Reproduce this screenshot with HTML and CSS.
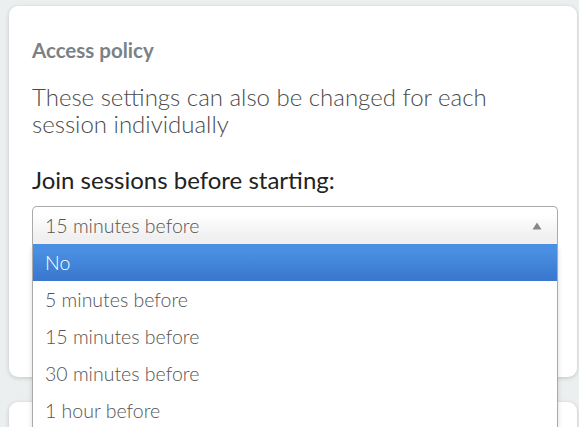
FILE: index.html
```html
<!DOCTYPE html>
<html lang="en">
<head>
<meta charset="utf-8">
<title>Access policy</title>
<link rel="stylesheet" href="styles.css">
</head>
<body>
<div class="page">
  <section class="card">
    <h2 class="card-title">Access policy</h2>
    <p class="hint">These settings can also be changed for each session individually</p>
    <label class="field-label">Join sessions before starting:</label>
    <div class="chosen open">
      <div class="chosen-single">
        <span class="value">15 minutes before</span>
        <svg class="arrow" width="10" height="8" viewBox="0 0 10 8"><path d="M5 0.5 L9.5 7.5 L0.5 7.5 Z" fill="#888"/></svg>
      </div>
      <ul class="chosen-drop">
        <li class="opt highlighted">No</li>
        <li class="opt">5 minutes before</li>
        <li class="opt">15 minutes before</li>
        <li class="opt">30 minutes before</li>
        <li class="opt">1 hour before</li>
      </ul>
    </div>
  </section>
  <section class="card card-next"></section>
</div>
</body>
</html>
```

FILE: styles.css
```css
html, body {
  margin: 0;
  padding: 0;
  background: #eceff0;
  font-family: Lato, "Open Sans", sans-serif;
  overflow: hidden;
  height: 427px;
}
.page {
  padding: 6px 2px 0 9px;
}
.card {
  background: #fff;
  border-radius: 9px;
  box-shadow: 0 1px 4px rgba(0, 0, 0, 0.18);
  padding: 32px 19px 0 23px;
  height: 339px;
}
.card-next {
  margin-top: 25px;
  height: 60px;
}
.card-title {
  margin: 0;
  font-size: 20.5px;
  line-height: 24px;
  font-weight: 700;
  color: #7b8185;
}
.hint {
  margin: 21px 0 0;
  font-size: 24px;
  font-weight: 300;
  line-height: 27px;
  color: #4a4a4a;
}
.field-label {
  display: block;
  margin-top: 29px;
  font-size: 24px;
  line-height: 28px;
  color: #222;
}
.chosen {
  position: relative;
  margin-top: 12px;
}
.chosen-single {
  display: flex;
  align-items: center;
  justify-content: space-between;
  height: 38px;
  box-sizing: border-box;
  border: 1px solid #aaa;
  border-bottom: 0;
  border-radius: 5px 5px 0 0;
  background: linear-gradient(#fff 20%, #f0f0f0 80%);
  padding: 0 15px 0 12px;
  font-size: 19.5px;
  font-weight: 300;
  color: #555;
}
.arrow {
  display: block;
}
.chosen-drop {
  position: absolute;
  top: 38px;
  left: 0;
  right: 0;
  margin: 0;
  padding: 0;
  list-style: none;
  background: #fff;
  border: 1px solid #aaa;
  border-top: 0;
  box-shadow: 0 4px 5px rgba(0, 0, 0, 0.15);
  height: 200px;
}
.opt {
  height: 37px;
  line-height: 37px;
  padding: 0 12px;
  font-size: 19.5px;
  font-weight: 300;
  color: #555;
}
.opt.highlighted {
  background: linear-gradient(#4a8fe2 20%, #3a79cf 90%);
  color: #fff;
}
```
